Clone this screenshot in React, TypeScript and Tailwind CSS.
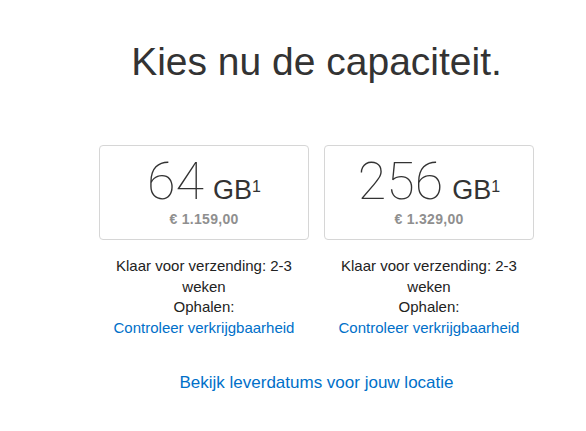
export default function App() {
  const options = [
    { size: "64", price: "€ 1.159,00" },
    { size: "256", price: "€ 1.329,00" },
  ];

  return (
    <div className="w-[586px] h-[431px] bg-white font-['Liberation_Sans',Arial,sans-serif] text-[#333]">
      <div className="ml-[99px] w-[435px] flex flex-col items-center">
        <h1 className="mt-[34px] text-[39px] leading-[56px] text-[#333]">Kies nu de capaciteit.</h1>

        <div className="mt-[55px] flex gap-[15px]">
          {options.map((o) => (
            <div key={o.size} className="w-[210px] flex flex-col items-center">
              <div className="w-[210px] h-[95px] rounded-[4px] border border-[#d6d6d6] flex flex-col items-center pt-[8px]">
                <div className="flex items-baseline">
                  <span className="font-['Roboto',sans-serif] font-thin text-[52px] leading-[56px] text-[#333]">{o.size}</span>
                  <span className="ml-[9px] text-[27px] text-[#333]">GB</span>
                  <sup className="text-[16px] relative -top-[7px]">1</sup>
                </div>
                <div className="-mt-[2px] text-[14px] font-bold text-[#8f8f8f] tracking-[0.3px]">{o.price}</div>
              </div>
              <div className="mt-[16px] text-[15px] leading-[20.5px] text-center text-[#222] w-[220px]">
                Klaar voor verzending: 2-3 weken
                <br />
                Ophalen:
                <br />
                <a className="text-[#0070c9]">Controleer verkrijgbaarheid</a>
              </div>
            </div>
          ))}
        </div>

        <a className="mt-[32px] text-[17px] text-[#0070c9]">Bekijk leverdatums voor jouw locatie</a>
      </div>
    </div>
  );
}
